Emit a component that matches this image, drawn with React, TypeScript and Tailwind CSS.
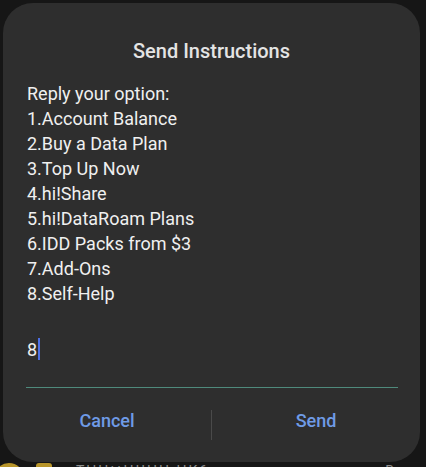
import React from "react";

const options = [
  "Reply your option:",
  "1.Account Balance",
  "2.Buy a Data Plan",
  "3.Top Up Now",
  "4.hi!Share",
  "5.hi!DataRoam Plans",
  "6.IDD Packs from $3",
  "7.Add-Ons",
  "8.Self-Help",
];

const App: React.FC = () => {
  return (
    <div
      className="w-[426px] h-[467px] bg-[#161616] overflow-hidden flex flex-col"
      style={{ fontFamily: "Roboto, 'Noto Sans', sans-serif" }}
    >
      <div className="mt-[3px] mx-[3px] w-[417px] h-[459px] shrink-0 rounded-[30px] bg-[#2e2e2e] flex flex-col">
        <h2 className="pt-[34px] text-[20px] leading-[28px] font-medium text-center text-[#e4e4e4]">
          Send Instructions
        </h2>
        <div className="mt-[16px] px-[24px] text-[18px] leading-[25px] text-[#f0f0f0]">
          {options.map((line) => (
            <p key={line}>{line}</p>
          ))}
        </div>
        <div className="mt-[29px] ml-[23px] mr-[22px] pb-[24px] border-b border-[#4f8a7c]">
          <div className="flex items-center h-[28px] pl-[1px] text-[18px] text-[#f0f0f0]">
            <span>8</span>
            <span className="ml-[1px] w-[2px] h-[22px] bg-[#4c6fe6]"></span>
          </div>
        </div>
        <div className="mt-[22px] flex items-center h-[30px]">
          <button className="flex-1 text-center text-[18px] leading-[24px] font-medium text-[#6f9be6] mb-[9px]">
            Cancel
          </button>
          <div className="w-px h-[30px] bg-[#4a4a4a]"></div>
          <button className="flex-1 text-center text-[18px] leading-[24px] font-medium text-[#6f9be6] mb-[9px]">
            Send
          </button>
        </div>
      </div>
      <div className="h-[5px] flex items-start overflow-hidden">
        <div className="-ml-[6px] mt-[1px] w-[30px] h-[30px] rounded-full border-[6px] border-[#b8952a] shrink-0"></div>
        <div className="ml-[12px] mt-[1px] w-[16px] h-[16px] rounded-[3px] bg-[#b8952a] shrink-0"></div>
        <div className="ml-[24px] -mt-[1px] text-[14px] leading-[20px] text-[#8a8a8a] tracking-[2px]">
          THHttHIIHH HK6
        </div>
        <div className="ml-auto mr-[32px] -mt-[1px] text-[14px] leading-[20px] text-[#8a8a8a]">
          B
        </div>
      </div>
    </div>
  );
};

export default App;
